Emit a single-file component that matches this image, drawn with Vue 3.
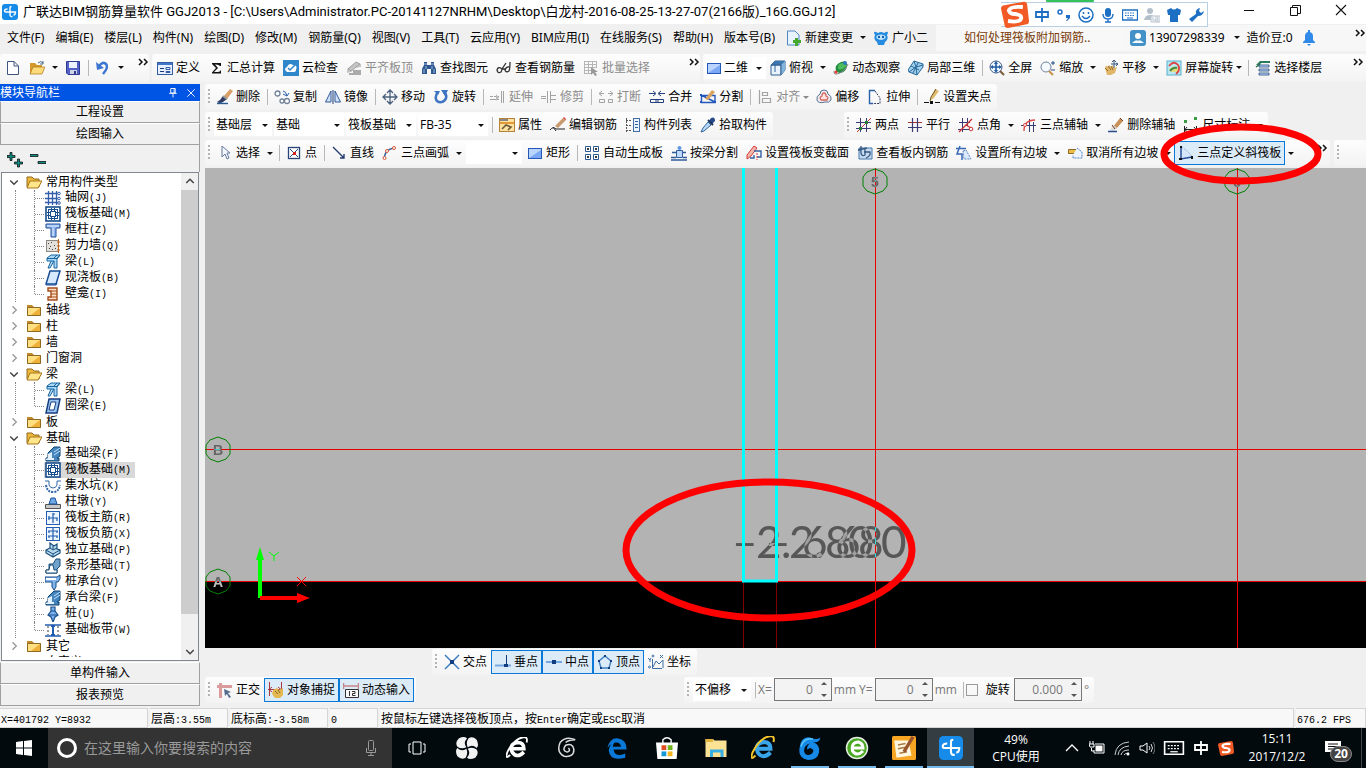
<script setup>
import { h } from 'vue'

const B = '#2b5fa8'
const N = '#183c78'
const G = '#a3a3a3'
const line = (d, c = N, w = 1) => `<path d="${d}" fill="none" stroke="${c}" stroke-width="${w}"/>`
const fill = (d, c) => `<path d="${d}" fill="${c}"/>`

const glyphs = {
  app: '<rect width="16" height="16" rx="3" fill="#168bea"/>' + line('M8 3V10.5Q8 13 10.5 12.5M5.5 5Q2.5 5 2.5 7Q2.500 8 4 8H13.5Q13.5 11 11.5 11M8 3.500Q8 2.500 9.500 2.500', '#fff', 1.4),
  new: '<path d="M2.5 1.5H9L13.5 6V14.5H2.5Z" fill="#fff" stroke="#41557f"/>' + line('M9 1.5V6H13', '#41557f'),
  open: fill('M1 3H6L8 5H13V14H1Z', '#d59a2c') + '<path d="M1 14L4 7H16L13 14Z" fill="#ffdc7a" stroke="#a87418" stroke-width=".7"/>' + line('M9 3Q12 0 14 3M14 1V4H11', '#49688f'),
  save: '<path d="M1.5 1.5H14.5V14.5H3L1.5 13Z" fill="#5260c8" stroke="#303b92"/><rect x="4" y="2" width="8" height="6" fill="#eef2ff"/><rect x="5" y="10" width="7" height="4" fill="#cfd3e5"/><rect x="9" y="11" width="2" height="3" fill="#303b92"/>',
  undo: line('M4 6Q8 1 11 4T8 14', '#3d76d2', 2.5) + fill('M1 2L2 10L9 8Z', '#3d76d2'),
  define: '<rect x="0.5" y="2.5" width="15" height="12" fill="#e8f0ff" stroke="#345da5"/><path d="M1 3H15V5H1Z" fill="#4477c8"/>' + line('M3 8.5H7M3 11.5H7', N) + '<path d="M9 7.5H13V9.5H9ZM9 11.5H13V12.5H9Z" fill="none" stroke="#345da5"/>',
  sigma: fill('M4 3H13V6H12Q11 4.5 8 4.5H7L10 8L6 12H10Q12 12 13 10V13.5H4V12.5L8 8L4 4Z', '#111'),
  cloud: '<rect width="16" height="16" fill="#2e87ca"/><path d="M4 12Q0 9 4 7Q6 2 10 5Q15 5 13 10Q13 12 10 12Z" fill="#fff"/>' + line('M5 8L7 10L12 5', '#2e87ca', 1.5),
  slab: fill('M1 9L10 2L15 4V7L9 8L5 12L1 13Z', '#c5c5c5') + line('M2 9L10 2L14 4L5 11Z', G) + fill('M7 10H15V15H3V13H7Z', '#aaa'),
  binoc: fill('M3 2H6V5H10V2H13V5L15 9V14H10V9H6V14H1V9L3 5Z', '#2e568f') + line('M3 9V13M5 6V9M11 6V9M13 9V13', '#9dbbe5') + line('M3 4H6M10 4H13', '#9dbbe5'),
  glasses: line('M6 9Q2 6 1 10Q2 14 5 12Q6 10 6 9L10 3M14 7Q10 6 9 10Q10 13 13 11Q14 9 14 2M6 9H9', '#333', 1.3),
  batch: line('M1 1.5H13M1 4.5H13M1 7.5H13M1 10.5H8M1 13.5H8M1.5 1V14M5.5 1V14M9.5 1V8M13.5 1V8', '#b5b5b5') + fill('M8 7L15 12L12 12L14 15L12 16L10 13L8 15Z', '#999'),
  rect: '<rect x="1.5" y="3.5" width="13" height="10" fill="#b9d4ff" stroke="#2458b8"/>' + fill('M2 13L14 5V13Z', '#7aa8f5'),
  cube: '<path d="M1 5L5 1H15V10L11 15H1Z" fill="#e8f3ff" stroke="#315e94"/><path d="M1 5H11V15M11 5L15 1" fill="none" stroke="#315e94"/><path d="M1 5L5 1H15L11 5Z" fill="#3b76ae"/><path d="M11 5L15 1V10L11 15Z" fill="#83b4dc"/>' + line('M1 5H11V15M5 5V12', '#315e94'),
  orbit: fill('M3 11Q1 5 8 2Q15 0 14 7Q12 13 6 13Z', '#208a40') + fill('M5 9Q4 3 10 3L14 5Q10 11 5 9Z', '#4fbc5c') + line('M1 11Q0 16 7 13Q14 9 15 4', '#888') + '<circle cx="3" cy="12" r="1.5" fill="#e53b33"/><circle cx="12" cy="3" r="2" fill="#2f7ac0"/>',
  local3d: '<path d="M0 10L6 1L15 4V7L9 15L1 12Z" fill="#a3d1ec" stroke="#26679b"/>' + line('M6 1L8 7L1 12M8 7L15 5M8 7L9 15M3 6L11 10M10 3L5 13', '#26679b'),
  full: '<circle cx="7" cy="7" r="6" fill="#eaf5ff" stroke="#465d82"/>' + line('M11 11L15 15', '#7b5a3a', 2) + line('M3 7H11M7 3V11', '#245c9f', 1.6) + fill('M7 1L9 4H5ZM7 13L9 10H5ZM1 7L4 5V9ZM13 7L10 5V9Z', '#245c9f'),
  zoom: '<circle cx="6" cy="7" r="5" fill="#f5faff" stroke="#71849e"/>' + line('M9 11L13 15', '#c89049', 2) + line('M11 3H15M13 1V5M11 10H15', '#234b84'),
  pan: fill('M2 8Q3 4 5 7L6 5L8 7L10 5L11 8L14 7L12 13L8 15H4Z', '#e0b76a') + line('M2 8L5 11M5 6L8 10M8 6L10 10', '#966622') + line('M11 1V8M8 4H15M9 2L11 0L13 2M13 3L15 4L13 6', '#375780'),
  screen: '<rect x="1" y="1" width="14" height="14" fill="#b9e8f5" stroke="#55b2c9"/><path d="M3 9Q8 4 13 9L11 12H5Z" fill="#e2dc83"/>' + line('M3 6Q8 0 12 5Q15 10 10 14', '#d44', 1.8) + line('M4 11Q7 7 11 8', '#468b45', 2),
  floor: fill('M1 5L5 1H15V3H6L5 5Z', '#2a7a5c') + '<path d="M4 5H14V7H4ZM4 9H14V11H4ZM4 13H14V15H4Z" fill="#bcd8ff" stroke="#234c78" stroke-width=".8"/>' + line('M1 7L4 5', '#277348', 1.5),
  erase: fill('M5 10L12 1L15 4L8 12Z', '#c99157') + fill('M5 8L9 11L6 14L2 13Z', '#ddd') + line('M4 8L7 12M12 1L15 4', '#783b20') + line('M0 14.5H9', '#2b4d8c', 1.5),
  brush: fill('M7 7L13 0L16 2L10 10Z', '#d9a06a') + fill('M6 7L10 10L6 13Q3 15 0 13L3 11Z', '#303b63') + line('M6 7L10 10', '#999', 2) + line('M0 14.5H11', '#245b96', 1.4),
  copy: '<g fill="#fff" stroke="#718299" stroke-width="1.3"><circle cx="3.5" cy="4.5" r="2.5"/><circle cx="8" cy="12" r="2"/><circle cx="13" cy="12" r="2.5"/></g>' + line('M9 2Q12 2 13 7M9 5L13 7L15 4', B),
  mirror: '<path d="M.5 13L6 2V13ZM10 2L15.5 13H10Z" fill="#d2e2fb" stroke="#315a9b"/>' + line('M8 1V15', N),
  move: line('M8 1V15M1 8H15M5 4L8 1L11 4M5 12L8 15L11 12M4 5L1 8L4 11M12 5L15 8L12 11', '#4a607e', 1.3),
  rotate: line('M5 3Q1 8 4 12Q8 15 12 11Q15 7 11 3', '#3d75c2', 2.5) + fill('M8 1H15L12 7ZM1 2H7L5 6Z', '#3d75c2'),
  extend: line('M0 7.5H3M4 7.5H9M0 10.5H9M11.5 2V14M13.5 2V14', G) + fill('M6 5L9 8.5L6 12Z', '#bbb'),
  trim: line('M0 7.5H5M6.5 2V14M9.5 2V14M0 9.5H5', G) + line('M10 6.5H15M10 10.5H15', G),
  break: line('M1 4.5H6M10 4.5H15M4 2L1 4.5L4 7M12 2L15 4.5L12 7M1.5 10.5H6.5V13.5H1.5ZM10.5 10.5H14.5V13.5H10.5Z', G),
  merge: line('M0 4.5H6M10 4.5H16M4 2L7 4.5L4 7M12 2L9 4.5L12 7M1.5 10.5H14.5V13.5H1.5ZM7 10V13M9 10V13', '#243f80'),
  split: line('M1.5 6.5H15V13.5H1.5ZM1 6L15 13', '#2457bd', 1.4) + fill('M5 10L12 1L15 3L8 11Z', '#dba35d') + fill('M0 5H2V7H0ZM14 12H16V14H14ZM0 12H2V14H0Z', '#2457bd'),
  align: line('M2.5 1V15M5.5 3.5H10.5V6.5H5.5ZM5.5 9.5H13.5V13.5H5.5Z', G, 1.2),
  offset: '<path d="M8 1Q12 1 12 5Q16 7 15 11Q13 14 9 13Q2 15 1 11Q0 7 4 5Q4 1 8 1Z" fill="#e8edf4" stroke="#61728e"/><path d="M8 4Q10 4 10 7Q13 8 11 11H5Q3 8 6 7Q6 4 8 4Z" fill="#ffe5dc" stroke="#d86560" stroke-width="1.3"/>',
  stretch: line('M8 1.5H2.5V14.5H6', '#2b5fa8', 1.4) + '<path d="M8 2L13 9V14.5H6" fill="none" stroke="#34405e" stroke-dasharray="2 1"/>',
  grip: line('M0 13.5H5M11 13.5H16', '#111') + fill('M6 12H9V15H6Z', '#111') + fill('M6 11L11 0L15 2L9 10Z', '#e0bb70') + line('M6 12L7 8L12 0', '#6b5426'),
  props: '<rect x=".5" y="1.5" width="15" height="13" fill="#ffe1a0" stroke="#b6813a"/><path d="M1 2H9V4H1Z" fill="#888"/>' + fill('M1 5H15V7H1Z', '#e59a3a') + line('M3 12L7 8L12 10L9 13', '#695a37', 1.6),
  editbar: line('M0 13Q3 9 6 12H15M3 10L6 14', '#222') + fill('M5 9L13 1L16 3L8 11Z', '#c99a6d') + fill('M13 1L14 0L16 2L16 3Z', '#d33'),
  list: '<rect x="8.5" y="1.5" width="6" height="13" fill="#e9f2ff" stroke="#456da5"/>' + line('M10 4.5H13M10 7.5H13M10 10.5H13', B) + '<path d="M1 3.5H6M1 8.5H6M1 13.5H6M1.5 1V15" fill="none" stroke="#555" stroke-dasharray="2 1"/>',
  picker: fill('M9 4L11 1Q15 -1 15 4L12 7Z', '#284a87') + line('M8 3L13 8', '#18345d', 2) + '<path d="M8 5L11 8L4 14L1 15L3 11Z" fill="#b5d8fb" stroke="#32639d"/>',
  twopt: line('M0 5.5H15M0 11.5H15M4.5 1V15M10.5 1V15', '#3a3a75') + line('M1 15L15 1', '#c33') + fill('M3 10H6V13H3ZM9 4H12V7H9Z', '#287e35'),
  parallel: line('M1 5.5H15', '#a33') + line('M1 10.5H15M5.5 1V15M10.5 1V15', '#3a3a75', 1.2),
  angle: line('M1 5.5H12M0 12.5H15M4.5 1V15M9.5 1V9', '#3a3a75') + line('M1 15L14 2M8 8L13 11', '#c33', 1.4) + '<circle cx="13" cy="12" r="1.8" fill="#fff" stroke="#c33"/>',
  axisarc: line('M0 8.5H15M8.5 2V15M12.5 5V15', '#3a3a75') + line('M3 14Q3 3 14 3', '#d44', 1.4) + '<circle cx="4" cy="8" r="1.5" fill="#fff" stroke="#d44"/>',
  measure: fill('M1 3H4V6H1ZM11 0H14V3H11Z', '#399b43') + line('M1.5 9V15M13.5 9V15M2 12.5H13M4 10L2 12.5L4 15M11 10L13 12.5L11 15', '#222'),
  cursor: '<path d="M5 1V12L8 9L10 14L12 13L10 8H13Z" fill="#f3f7ff" stroke="#66799d"/>',
  point: '<rect x="2.5" y="2.5" width="11" height="11" fill="#fff" stroke="#27457a" stroke-width="1.3"/>' + line('M4 4L12 12M12 4L4 12', '#274f94') + fill('M7 7H10V10H7Z', '#d22'),
  straight: line('M2 2L13 13M13 9V13H9', '#233d71', 1.4),
  arc: line('M2 14Q3 4 12 3', '#355d9b', 1.5) + '<g fill="#fff" stroke="#d45839"><circle cx="2.5" cy="13" r="1.5"/><circle cx="5" cy="6" r="1.5"/><circle cx="12" cy="3" r="1.5"/></g>',
  auto: '<g fill="#fff" stroke="#28558c"><path d="M1.5 1.5H6.5V6.5H1.5ZM9.5 1.5H14.5V6.5H9.5ZM1.5 9.5H6.5V14.5H1.5ZM9.5 9.5H14.5V14.5H9.5Z"/></g>' + fill('M3 3H5V5H3ZM11 3H13V5H11ZM3 11H5V13H3ZM11 11H13V13H11Z', '#333'),
  beam: '<path d="M5.5 5.5H11.5V12.5H5.5Z" fill="#bdd9ff" stroke="#315c99"/><circle cx="8.5" cy="3" r="2" fill="#6197e1"/>' + line('M1 7.5H5M12 7.5H15M0 12.5H5M12 12.5H16M0 15H16', '#315c99', 1.3),
  section: '<path d="M1 10L8 1L11 3L5 11L1 14Z" fill="#f3b7ab" stroke="#d33b3b"/><path d="M4 13H8V10M8 6H15V12H11" fill="none" stroke="#3561a2" stroke-width="1.4"/><path d="M11 8V15" stroke="#d33" stroke-dasharray="2 1"/>',
  inside: '<path d="M2 3H15V14H2Z" fill="#c7dcf2" stroke="#4776aa"/>' + line('M4 1V8Q5 12 8 10V4M1 5L10 3M7 7H13Q14 11 9 13', '#37597f', 1.3),
  slope: line('M0 3.5H10M4 1L1 9H6V15', '#3767b5', 1.5) + '<path d="M7 6L10 5L15 14H8Z" fill="#dce9ff" stroke="#5b86c4" stroke-dasharray="2 1"/>',
  unslope: fill('M1 5H9V9H1Z', '#e9bd48') + line('M1.5 4.5H9.5V8.5H1.5Z', '#8c6a25') + '<path d="M10 3L15 7V13H6V10" fill="#edf4ff" stroke="#4c7ec6" stroke-dasharray="2 1"/>',
  threept: '<path d="M3 2V14L14 12Q10 5 3 2Z" fill="#d5e6fa" stroke="#9ab4d6" stroke-dasharray="2 1"/>' + line('M3 2V14L14 12', '#264b9b', 1.4) + fill('M2 1H4V3H2ZM1 13H4V15H1ZM13 11H15V14H13Z', '#111'),
  cross: line('M1 1L15 15M15 1L1 15', '#3f7fc2', 1.5) + fill('M6 6H10V10H6Z', '#123e80'),
  perp: line('M0 11.5H16', '#74a8de', 2) + line('M11.5 1V11', '#123e80') + fill('M9 10H13V13H9Z', '#123e80'),
  mid: line('M0 8H16', '#74a8de', 2) + fill('M6 6H10V10H6Z', '#123e80'),
  vertex: line('M8 2L14 7L12 14H4L2 7Z', '#3f7fc2', 1.4) + fill('M7 1H9V3H7ZM1 6H3V8H1ZM13 6H15V8H13ZM3 13H5V15H3ZM11 13H13V15H11Z', '#123e80'),
  coord: line('M4.5 5V14.5H14M5 13L8 7L11 10L15 6M15 6V14M0 4L2 6V8M3 4L2 6M12 1L15 4M15 1L12 4', '#3f70a6') + '<g fill="#fff" stroke="#3f70a6"><circle cx="1.5" cy="13" r="1"/><circle cx="5" cy="2" r="1"/></g>',
  ortho: fill('M2 1H5V16H2ZM0 3H15V6H0Z', '#d99b9b') + fill('M7 7L14 10L11 11L14 15L12 16L10 12L8 14Z', '#536d8e'),
  snap: line('M1.5 0V14M13.5 0V8M0 7.5H14M4 5L1 7.5L4 10M10 5L13 7.5L10 10', '#a8383d') + fill('M5 8L9 6L11 8L15 6V13L12 16H7L4 12Z', '#e3b850') + line('M7 9L10 12M10 8L12 11', '#8a6829'),
  dyn: line('M.5 1V7M15.5 1V7M1 4H15', '#c58686', 1.5) + '<path d="M2.5 7.5H15.5V15.5H2.5Z" fill="#f9f9f9" stroke="#333"/>' + line('M6.5 9V14M9 9.5H12V11.5H9.5V13.5H12.5', '#333'),
  docplus: '<path d="M1.5 1H9L13 5V15H1.5Z" fill="#e7f3ff" stroke="#4f87c3"/>' + fill('M9 8H12V10H15V13H12V16H9V13H7V10H9Z', '#46a82c'),
  mascot: fill('M1 3Q1 1 3 2L5 3Q8 1 11 3L13 2Q15 1 15 3L14 5Q16 9 12 12L11 15H5L4 12Q0 9 2 5Z', '#258ce0') + fill('M3.5 6Q8 3 12.5 6V8Q8 12 3.5 8Z', '#bfe3fa') + fill('M5 6H7V8H5ZM9 6H11V8H9Z', '#155da8'),
  user: '<rect width="16" height="16" rx="3" fill="#4391c7"/><circle cx="8" cy="6" r="3" fill="#fff"/><path d="M2 13Q8 7 14 13Z" fill="#fff"/><path d="M7 9H9L8 12Z" fill="#4391c7"/>',
  bell: fill('M2 12L4 10V5Q5 2 7 2V0H9V2Q12 3 12 6V10L14 12V13H2ZM6 14H10L8 16Z', '#318ae8'),
  fclose: fill('M1 3H6L8 5H15V14H1Z', '#c08a28') + '<path d="M1.5 5.5H14.5V13.5H1.5Z" fill="#ffdf80" stroke="#8f6a20"/>' + fill('M5 13L14 6V13Z', '#eeb03a'),
  fopen: '<path d="M1 3H6L8 5H13V13H1Z" fill="#eeb83d" stroke="#8f6a20"/><path d="M1 14L4 7H16L12 14Z" fill="#ffe68b" stroke="#a87418"/>',
  mesh: line('M3.5 1V15M7.5 1V15M11.5 1V15M0 3.5H15M0 8.5H15M0 12.5H15', '#355eaa', 1.3) + '<g fill="#fff" stroke="#355eaa"><circle cx="14" cy="3.5" r="1.3"/><circle cx="14" cy="8.5" r="1.3"/><circle cx="14" cy="13" r="1.3"/></g>',
  raft: '<rect x="1" y="1" width="14" height="14" fill="#fff" stroke="#174d8c" stroke-width="1.6"/>' + line('M3 3.5H13M3 12.5H13M3.5 3V13M12.5 3V13M6.5 2V14M9.500 2V14M2 6.5H14M2 9.5H14', '#174d8c') + '<rect x="5.5" y="5.5" width="5" height="5" fill="#fff" stroke="#174d8c"/>',
  column: '<path d="M1 2H15V6H11V15H6V6H1Z" fill="#90b8ef" stroke="#224f9a"/>' + line('M2 4H14M8 6V14', '#e5f0ff'),
  wall: '<rect x="1.5" y="2.5" width="12" height="11" fill="#e3dfdb" stroke="#8c8782"/>' + fill('M3 5H4V6H3ZM6 4H7V5H6ZM9 7H10V8H9ZM4 10H5V11H4ZM7 11H8V12H7ZM5 8H6V9H5ZM10 10H11V11H10Z', '#444') + line('M13.5 1V15M12 4H15M12 8H15M12 12H15', '#bc6523'),
  beam2: '<path d="M2 4L6 1H15L12 5V14H9V7L5 14H3L6 7H2Z" fill="#a9d7fa" stroke="#16659e"/>' + line('M2 4.500H12L15 1M6 7H9M9 4L12 1', '#16659e'),
  plate: '<path d="M5 1H15L11 14H1Z" fill="#d7e9ff" stroke="#174d98" stroke-width="1.5"/>' + line('M1 15H11L12 13', '#174d98'),
  niche: '<path d="M3 2H12V14H3V11H6V5H3Z" fill="#ffdfc3" stroke="#a44d1c" stroke-width="1.4"/>' + line('M6 5H12M6 8H12M6 11H12', '#a44d1c'),
  ring: '<path d="M4 1H15L12 15H1Z" fill="#9dc5f4" stroke="#153e7e" stroke-width="1.5"/><path d="M6 4H11L9 12H4Z" fill="#fff" stroke="#153e7e"/>',
  fbeam: '<path d="M1 15V12H3V7L9 1H15V10L12 12H14V15Z" fill="#4585bd" stroke="#0c4272"/><path d="M3 12V8L7 6V12H9V14H1V13Z" fill="#e3f1ff"/>' + line('M9 6L15 2M9 9L15 5', '#c1e0fb'),
  pit: '<path d="M0 3H4V7Q5 10 8 10Q11 10 12 7V3H16" fill="none" stroke="#3267aa"/>' + '<path d="M1 7Q2 14 8 14Q14 14 15 7" fill="none" stroke="#3267aa" stroke-width="2" stroke-dasharray="2 1"/>',
  pier: '<path d="M.5 10.5H15.5V14.5H.5Z" fill="#c8c8c8" stroke="#555"/><path d="M6 4H10L12 10H4Z" fill="#6fa8e5" stroke="#18529b"/>',
  main: '<rect x="1.5" y="1.5" width="13" height="13" fill="#edf5ff" stroke="#225eaf"/>' + line('M8 3V13M3 8H13M4 6V10M8 4H10M12 8V11', '#225eaf', 1.2),
  neg: '<rect x="1.5" y="1.5" width="13" height="13" fill="#edf5ff" stroke="#225eaf"/>' + line('M8 2V14M3 5H13M4 5V7M12 5V7M3 10H13M4 10V12M12 10V12', '#225eaf', 1.2),
  isolated: '<path d="M1 8L5 6V1L9 4L12 2V7L15 8V11L8 15L1 11Z" fill="#b8d9ed" stroke="#184f7c" stroke-width="1.2"/>' + line('M1 8L8 12L15 8M8 12V15M5 6L8 8L12 6M8 4V8', '#184f7c'),
  strip: '<path d="M1 15V12H4V6H8L11 1H15V8L12 11V15Z" fill="#70a4cc" stroke="#174d78"/><path d="M1 15V12H4L5 7H8L9 12H12V15Z" fill="#fff" stroke="#174d78"/>',
  cap: '<path d="M0 3H12L15 1V5L13 8H11V13L9 16L7 13V8H0Z" fill="#82b5e8" stroke="#174d8c"/><path d="M1 4H11V6H1Z" fill="#fff"/>',
  pile: '<path d="M6 1H10V5L13 9L10 11L8 16L6 11L3 9L6 5Z" fill="#79b0ef" stroke="#194f8a" stroke-width="1.2"/>' + line('M6 5H10M3 9H13', '#194f8a'),
  band: line('M0 3H16M0 14H16', '#225eaf', 1.4) + line('M8 4V13M6 4H10M6 13H10', '#225eaf', 2) + '<path d="M3 4V13M13 4V13" fill="none" stroke="#333" stroke-dasharray="2 2"/>',
  sogou: '<path d="M2 3L13 1Q15 1 15 3L16 12Q16 14 14 14L4 16Q2 16 2 14L0 5Q0 3 2 3Z" fill="#f15a24"/>' + line('M12.5 4Q5 3.5 4.500 6Q5 8 8 8Q12 8.5 11.5 10.5Q11 13 4 12', '#fff', 2.2),
  zhong: line('M2 5H14V10H2ZM8 1V15', 'currentColor', 1.8),
  comma: '<circle cx="4" cy="5" r="2" fill="none" stroke="currentColor" stroke-width="1.5"/><path d="M10 8H14V11L11 14H10L12 11H10Z" fill="currentColor"/>',
  smile: '<circle cx="8" cy="8" r="7" fill="none" stroke="currentColor" stroke-width="1.5"/>' + line('M4 9Q8 14 12 9M5.5 5V7M10.5 5V7', 'currentColor', 1.5),
  mic: '<rect x="5" y="1" width="6" height="9" rx="3" fill="currentColor"/>' + line('M3 7Q3 12 8 12Q13 12 13 7M8 12V15M5 15H11', 'currentColor', 1.4),
  micline: '<rect x="5.5" y=".5" width="5" height="10" rx="1" fill="none" stroke="currentColor"/>' + line('M3.5 8V12.5H12.5V8M8 12V15M5 15.5H11', 'currentColor'),
  keys: '<path d="M.5 3H15.5V13H.5Z" fill="none" stroke="currentColor" stroke-width="1.3"/><path d="M3 6H13M3 8.5H13" stroke="currentColor" stroke-dasharray="1.5 1"/><path d="M5 11H11" stroke="currentColor"/>',
  person: '<circle cx="6" cy="4" r="3" fill="currentColor"/><path d="M0 13Q1 8 6 8T12 13Z" fill="currentColor"/><path d="M7 9H16V15H7Z" fill="#fff" stroke="currentColor"/>' + line('M9 10V14M11 10H14V14H11V12H14', 'currentColor'),
  shirt: fill('M1 3L5 1Q8 4 11 1L15 3L14 8H12V15H4V8H2Z', 'currentColor'),
  wrench: fill('M8 7Q7 2 12 1L11 4L13 6L16 4Q15 9 10 9L4 15L1 12Z', 'currentColor'),
  win: fill('M0 2L7 1V7.5H0ZM8 1L16 0V7.5H8ZM0 8.5H7V15L0 14ZM8 8.5H16V16L8 15Z', '#fff'),
  taskview: line('M4 2H12V14H4ZM2 4H0V12H2M14 4H16V12H14', '#fff'),
  pinwheel: '<g fill="#f2f2f2"><path d="M7.500 7.500Q4 9 1 7Q-1 4 2 1Q6 -1 8 1Q5 4 7.500 7.500ZM8.500 7.500Q7 4 9 1Q12 -1 15 2Q17 6 15 8Q12 5 8.500 7.500ZM8.500 8.500Q12 7 15 9Q17 12 14 15Q10 17 8 15Q11 12 8.500 8.500ZM7.500 8.500Q9 12 7 15Q4 17 1 14Q-1 10 1 8Q4 11 7.500 8.500Z"/></g>',
  ie: line('M13 11Q8 16 4.5 11Q2 5 8.5 4Q13 4 13 8.5H5', 'currentColor', 2.6) + line('M3 13Q-1 17 1 11Q6 1 13 0Q16 0 15 4', 'var(--orbit)', 1.3),
  swirl: line('M14 2Q7 -1 3 4Q0 11 6 14Q13 15 13 9Q12 4 7 6Q4 10 8 11Q11 10 9 8M14 2Q9 2 7 4', '#ddd', 1.1),
  edge: '<path d="M1 8Q3 0 9 1Q15 2 15 9H5.5Q6 13 10 13Q12 13 14 12V15Q3 18 2 10Q2 6 6 4Q5 6 5 7H11Q10 4 8 4Q4 4 1 8Z" fill="#0a78d7"/>',
  store: '<path d="M0 4H16L15 16H1Z" fill="#fff"/>' + line('M5 5V2Q8 -1 11 2V5', '#fff') + fill('M4 6H7.5V9.5H4Z', '#e34c22') + fill('M8.5 6H12V9.5H8.5Z', '#70b51d') + fill('M4 10.5H7.5V14H4Z', '#1497d4') + fill('M8.5 10.5H12V14H8.5Z', '#f5b51e'),
  explorer: fill('M1 2H6L7 3H15V14H1Z', '#fce294') + fill('M1 2H6V4H1Z', '#e2b33d') + fill('M4 9H13V14H11V11H6V14H4Z', '#38afe2'),
  glodon: fill('M15 1Q14 5 10 4Q15 6 14 11Q13 16 7 16Q0 15 1 8Q2 0 8 1Q12 3 15 1ZM8 5Q4 6 4 10Q5 14 9 12Q12 9 8 8L6 9Q6 6 8 5Z', '#1689e6') + line('M2 7Q4 1 10 2', '#59c8ff'),
  green: '<circle cx="8" cy="8" r="7" fill="#49a725" stroke="#e2efdc"/>' + line('M12 10Q8 14 5 10Q4 4 9 4Q12 5 12 8H5', '#fff', 2),
  note: '<rect width="16" height="16" rx="1" fill="#f6a622"/><path d="M1.5 3H11L13 13L3 14.5Z" fill="#fff7df"/>' + line('M4 6L9 5M4 8.5L9 7.5M5 11.5L10 10.5', '#a87942') + fill('M7 10L13 0L15 1L9 11Z', '#99532d'),
  up: line('M2 11L8 5L14 11', '#fff', 1.3),
  battery: '<rect x="6.5" y="5.5" width="7" height="6" fill="#fff"/>' + line('M6 4H15V13H5V10M1 1V4M4 1V4M0 4H5V7H1ZM2.5 8V11H5', '#fff'),
  wifi: line('M1 15Q2 3 15 2M4 15Q5 7 15 6M7 15Q8 10 15 10M10 15Q11 13 15 13', '#ccc') + '<circle cx="14" cy="14" r="1.5" fill="#fff"/>',
  sound: line('M1 6H4L8 3V13L4 10H1Z', '#fff') + line('M10 6Q12 8 10 10M12 4Q15 8 12 12', '#ddd') + line('M14 2Q18 8 14 14', '#777'),
  notice: fill('M0 1H16V12H10V15L7 12H0Z', '#fff') + line('M3 4H13M3 6.5H13M3 9H10', '#111'),
  more: line('M2 5L5 8L2 11M7 5L10 8L7 11', '#111', 1.5),
  plus: '<path d="M3 .5H5V3.5H8V5.5H5V8.5H3V5.5H0V3.5H3ZM10.5 7H12.5V10H15.5V12H12.5V15H10.5V12H7.5V10H10.5Z" fill="#0b8f83" stroke="#111" stroke-width=".8"/>',
  minus: '<path d="M0 2.5H8V4.5H0ZM8 9.5H16V11.5H8Z" fill="#0b8f83" stroke="#111" stroke-width=".8"/>',
  pin: line('M5 2H11V8H5ZM9.5 2V8M3 8.5H13M8 9V14', '#fff', 1.2),
  cancel: line('M3 3L13 13M13 3L3 13', '#fff', 1.2),
  min: line('M3 8.5H13', '#111'),
  restore: line('M3.5 5.5H10.5V13.5H3.5ZM5.5 5V3.5H13.5V11.5H11', '#111'),
  close: line('M3 3L13 13M13 3L3 13', '#111', 1.1),
  down: line('M3 6L8 11L13 6', '#444', 2),
  right: line('M6 3L11 8L6 13', '#999', 1.8),
  upg: line('M3 10L8 5L13 10', '#444', 2),
}

const Icon = (p) => h('svg', { class: 'icon', viewBox: '0 0 16 16', 'aria-hidden': 'true', innerHTML: glyphs[p.name] })
Icon.props = ['name']

const tool = (i, t, o = {}) => ({ i, t, ...o })
const pick = (s, o = {}) => ({ s, ...o })

const Bar = (p) => h('div', { class: ['bar', p.kind], role: 'toolbar' }, p.items.flatMap((it) => {
  if (it === '|') return [h('span', { class: 'sep' })]
  if (it === ':') return [h('span', { class: 'grip' })]
  if (it === '>>') return [h('button', { class: 'more', 'aria-label': '更多' }, h(Icon, { name: 'more' }))]
  if (it.s !== undefined) {
    return [h('label', { class: ['pick', it.size] }, [
      it.i ? h(Icon, { name: it.i }) : null,
      h('select', { 'aria-label': it.s || '选项' }, [h('option', it.s)]),
    ])]
  }
  const out = [h('button', { class: ['tool', { off: it.off, on: it.on }], disabled: it.off, 'aria-label': it.t || it.i }, [
    h(Icon, { name: it.i }), it.t ? h('span', it.t) : null,
  ])]
  if (it.c) out.push(h('button', { class: ['caret', { tight: it.c === 2, off: it.off }], 'aria-label': '展开' }))
  return out
}))
Bar.props = ['items', 'kind']

const menus = ['文件(F)', '编辑(E)', '楼层(L)', '构件(N)', '绘图(D)', '修改(M)', '钢筋量(Q)', '视图(V)', '工具(T)', '云应用(Y)', 'BIM应用(I)', '在线服务(S)', '帮助(H)', '版本号(B)']

const topBars = [
  { kind: 'first', items: [tool('new', ''), tool('open', '', { c: 1 }), tool('save', ''), '|', tool('undo', '', { c: 1 }), '>>'] },
  { kind: 'second', items: [tool('define', '定义'), tool('sigma', '汇总计算'), tool('cloud', '云检查'), tool('slab', '平齐板顶', { off: true }), tool('binoc', '查找图元'), tool('glasses', '查看钢筋量'), tool('batch', '批量选择', { off: true }), '>>'] },
  { kind: 'wide', items: [pick('二维', { i: 'rect', size: 'view' }), tool('cube', '俯视', { c: 1 }), tool('orbit', '动态观察'), tool('local3d', '局部三维'), '|', tool('full', '全屏'), tool('zoom', '缩放', { c: 1 }), tool('pan', '平移', { c: 1 }), tool('screen', '屏幕旋转', { c: 2 }), '|', tool('floor', '选择楼层'), '>>'] },
]

const workRows = [
  [{ items: [':', tool('brush', '删除'), '|', tool('copy', '复制'), tool('mirror', '镜像'), '|', tool('move', '移动'), tool('rotate', '旋转'), '|', tool('extend', '延伸', { off: true }), tool('trim', '修剪', { off: true }), '|', tool('break', '打断', { off: true }), tool('merge', '合并'), tool('split', '分割'), '|', tool('align', '对齐', { off: true, c: 2 }), tool('offset', '偏移'), tool('stretch', '拉伸'), '|', tool('grip', '设置夹点')] }],
  [
    { items: [':', pick('基础层', { size: 'short' }), pick('基础'), pick('筏板基础'), pick('FB-35'), '|', tool('props', '属性'), tool('editbar', '编辑钢筋'), tool('list', '构件列表'), tool('picker', '拾取构件')] },
    { kind: 'apart', items: [':', tool('twopt', '两点'), tool('parallel', '平行'), tool('angle', '点角', { c: 1 }), tool('axisarc', '三点辅轴', { c: 1 }), tool('erase', '删除辅轴'), tool('measure', '尺寸标注', { c: 1 })] },
  ],
  [
    { items: [':', tool('cursor', '选择', { c: 1 }), '|', tool('point', '点'), '|', tool('straight', '直线'), tool('arc', '三点画弧', { c: 1 }), pick('', { size: 'slim' }), tool('rect', '矩形'), '|', tool('auto', '自动生成板'), tool('beam', '按梁分割'), tool('section', '设置筏板变截面'), tool('inside', '查看板内钢筋'), tool('slope', '设置所有边坡', { c: 1 }), tool('unslope', '取消所有边坡', { c: 1 }), tool('threept', '三点定义斜筏板', { on: true, c: 1 }), '>>'], kind: 'full' },
    { kind: 'stub', items: [':'] },
  ],
]

const snapBar = [':', tool('cross', '交点'), tool('perp', '垂点', { on: true }), tool('mid', '中点', { on: true }), tool('vertex', '顶点', { on: true }), tool('coord', '坐标')]
const modeBar = [':', tool('ortho', '正交'), tool('snap', '对象捕捉', { on: true }), tool('dyn', '动态输入', { on: true })]

const leaf = (i, t, k, on) => ({ i, t, k, on })
const tree = [
  { t: '常用构件类型', kids: [leaf('mesh', '轴网', '(J)'), leaf('raft', '筏板基础', '(M)'), leaf('column', '框柱', '(Z)'), leaf('wall', '剪力墙', '(Q)'), leaf('beam2', '梁', '(L)'), leaf('plate', '现浇板', '(B)'), leaf('niche', '壁龛', '(I)')] },
  { t: '轴线' }, { t: '柱' }, { t: '墙' }, { t: '门窗洞' },
  { t: '梁', kids: [leaf('beam2', '梁', '(L)'), leaf('ring', '圈梁', '(E)')] },
  { t: '板' },
  { t: '基础', kids: [leaf('fbeam', '基础梁', '(F)'), leaf('raft', '筏板基础', '(M)', true), leaf('pit', '集水坑', '(K)'), leaf('pier', '柱墩', '(Y)'), leaf('main', '筏板主筋', '(R)'), leaf('neg', '筏板负筋', '(X)'), leaf('isolated', '独立基础', '(P)'), leaf('strip', '条形基础', '(T)'), leaf('cap', '桩承台', '(V)'), leaf('fbeam', '承台梁', '(F)'), leaf('pile', '桩', '(U)'), leaf('band', '基础板带', '(W)')] },
  { t: '其它' }, { t: '自定义' },
]

const ime = ['zhong', 'comma', 'smile', 'mic', 'keys', 'person', 'shirt', 'wrench']
const pinned = ['pinwheel', 'ie', 'swirl', 'edge', 'store']
const running = [{ i: 'explorer' }, { i: 'ie', c: 'blue' }, { i: 'glodon', c: 'run' }, { i: 'green', c: 'run' }, { i: 'note', c: 'run' }, { i: 'app', c: 'run now' }]
const tray = ['up', 'battery', 'wifi', 'sound', 'keys', 'zhong', 'sogou']
const glyphX = (start) => [0, 24, 49, 70, 93, 116].map((d) => start + d).join(' ')
</script>

<template>
  <div class="app">
    <header class="title">
      <Icon name="app" />
      <h1>广联达BIM钢筋算量软件 GGJ2013 - [C:\Users\Administrator.PC-20141127NRHM\Desktop\白龙村-2016-08-25-13-27-07(2166版)_16G.GGJ12]</h1>
      <button aria-label="最小化"><Icon name="min" /></button>
      <button aria-label="还原"><Icon name="restore" /></button>
      <button aria-label="关闭"><Icon name="close" /></button>
    </header>
    <div class="blob"></div>
    <div class="ime">
      <Icon name="sogou" class="logo" />
      <button v-for="n in ime" :key="n" :class="n" :aria-label="n"><Icon :name="n" /></button>
    </div>

    <nav class="menu">
      <button v-for="m in menus" :key="m">{{ m }}</button>
      <button class="iconic"><Icon name="docplus" />新建变更</button><button class="caret" aria-label="展开"></button>
      <button class="iconic">
        <Icon name="mascot" />广小二
      </button>
      <a class="tip" href="#">如何处理筏板附加钢筋..</a>
      <div class="account">
        <button class="iconic"><Icon name="user" />13907298339</button><button class="caret" aria-label="展开"></button>
        <span class="beans">造价豆:0</span>
        <button class="iconic" aria-label="通知"><Icon name="bell" /></button>
        <button class="more" aria-label="更多"><Icon name="more" /></button>
      </div>
    </nav>

    <div class="topbars">
      <Bar v-for="(b, i) in topBars" :key="i" :items="b.items" :kind="b.kind" />
    </div>

    <div class="body">
      <aside class="side">
        <div class="side-head"><span>模块导航栏</span>
          <button aria-label="固定"><Icon name="pin" /></button>
          <button aria-label="关闭"><Icon name="cancel" /></button>
        </div>
        <button class="tab">工程设置</button>
        <button class="tab">绘图输入</button>
        <div class="folds">
          <button aria-label="全部展开"><Icon name="plus" /></button>
          <button aria-label="全部折叠"><Icon name="minus" /></button>
        </div>
        <div class="treebox">
          <ul class="tree">
            <li v-for="g in tree" :key="g.t">
              <div class="group"><Icon :name="g.kids ? 'down' : 'right'" class="arrow" /><Icon :name="g.kids ? 'fopen' : 'fclose'" /><span>{{ g.t }}</span></div>
              <ul v-if="g.kids">
                <li v-for="k in g.kids" :key="k.t" class="leaf">
                  <span class="node" :class="{ picked: k.on }"><Icon :name="k.i" /><span>{{ k.t }}<kbd>{{ k.k }}</kbd></span></span>
                </li>
              </ul>
            </li>
          </ul>
          <div class="scroll"><Icon name="upg" /><div class="thumb"></div><Icon name="down" /></div>
        </div>
        <button class="tab">单构件输入</button>
        <button class="tab">报表预览</button>
      </aside>

      <main class="work">
        <div v-for="(r, i) in workRows" :key="i" class="row">
          <Bar v-for="(b, j) in r" :key="j" :items="b.items" :kind="b.kind" />
        </div>
        <svg class="canvas">
          <rect width="100%" height="100%" fill="#000" />
          <rect width="100%" height="413" fill="#b3b3b3" />
          <g stroke="#e60000">
            <path d="M670.5 0V1200M1032.5 0V1200" />
            <path d="M0 281.5H4000M0 413.5H4000" />
            <path d="M538.5 413V1200M571.5 413V1200" stroke="#800000" />
          </g>
          <g fill="none" stroke="#008000">
            <path d="M13 269L21 272L25 277V286L21 291L13 294L5 291L1 286V277L5 272Z" />
            <path d="M13 401L21 404L25 409V418L21 423L13 426L5 423L1 418V409L5 404Z" />
            <path d="M670 1L678 4L682 9V18L678 23L670 26L662 23L658 18V9L662 4Z" />
            <path d="M1032 1L1040 4L1044 9V18L1040 23L1032 26L1024 23L1020 18V9L1024 4Z" />
          </g>
          <g class="mark"><text x="13" y="287">B</text><text x="13" y="419">A</text><text x="670" y="19">5</text><text x="1032" y="19">6</text></g>
          <g class="level"><text :x="glyphX(527)" y="390">–2.680</text><text :x="glyphX(560)" y="390">–2.680</text></g>
          <path d="M538.5 0V413H571.5V0" fill="none" stroke="#0ff" stroke-width="3" />
          <path d="M55 430V392" stroke="#0f0" stroke-width="4" /><path d="M51 392L55 379L59 392Z" fill="#0f0" />
          <path d="M55 430H93" stroke="#f00" stroke-width="4" /><path d="M92 425L105 430L92 435Z" fill="#f00" />
          <path d="M64 384L69 388L74 384M69 388V393" fill="none" stroke="#0f0" />
          <path d="M92 409L101 418M101 409L92 418" fill="none" stroke="#f00" />
          <ellipse cx="564" cy="382" rx="143" ry="68" fill="none" stroke="#f00" stroke-width="7" />
        </svg>
        <div class="row snaps"><Bar :items="snapBar" /></div>
        <div class="row modes">
          <Bar :items="modeBar" />
          <div class="bar offset">
            <span class="grip"></span>
            <label class="pick short"><select aria-label="偏移方式"><option>不偏移</option></select></label>
            <span class="sep"></span>
            <label class="num">X=<span class="spin"><input value="0"><i></i></span>mm</label>
            <label class="num">Y=<span class="spin"><input value="0"><i></i></span>mm</label>
            <span class="sep"></span>
            <label class="check"><input type="checkbox"><span>旋转</span></label>
            <label class="num"><span class="spin long"><input value="0.000" aria-label="旋转角度"><i></i></span>°</label>
          </div>
        </div>
      </main>
    </div>

    <footer class="status">
      <span class="c1">X=401792 Y=8932</span>
      <span class="c2"><b>层高</b>:3.55m</span>
      <span class="c3"><b>底标高</b>:-3.58m</span>
      <span class="c4">0</span>
      <span class="c5"><b>按鼠标左键选择筏板顶点，按</b>Enter<b>确定或</b>ESC<b>取消</b></span>
      <span class="c6">676.2 FPS</span>
    </footer>

    <div class="taskbar">
      <button class="start" aria-label="开始"><Icon name="win" /></button>
      <label class="search"><span class="ring"></span><input placeholder="在这里输入你要搜索的内容" aria-label="搜索"><Icon name="micline" /></label>
      <button class="task view" aria-label="任务视图"><Icon name="taskview" /></button>
      <button v-for="n in pinned" :key="n" class="task" :aria-label="n"><Icon :name="n" /></button>
      <button v-for="n in running" :key="n.i" class="task open" :class="n.c" :aria-label="n.i"><Icon :name="n.i" /></button>
      <div class="cpu">49%<br>CPU使用</div>
      <div class="tray">
        <button v-for="n in tray" :key="n" :class="n" :aria-label="n"><Icon :name="n" /></button>
      </div>
      <div class="clock">15:11<br>2017/12/2</div>
      <button class="notice" aria-label="通知中心"><Icon name="notice" /><span>20</span></button>
    </div>

    <svg class="ellipse" viewBox="0 0 162 62"><ellipse cx="81" cy="31" rx="77" ry="27" fill="none" stroke="#f00" stroke-width="7" /></svg>
  </div>
</template>

<style scoped>
.app { position: relative; display: flex; flex-direction: column; min-height: 100vh; overflow: hidden; background: #f0f0f0; color: #000; font: 12px/16px "Open Sans", "Noto Sans CJK SC", sans-serif; }
.app :deep(*) { box-sizing: border-box; }
.app :deep(button), .app :deep(input), .app :deep(select) { font: inherit; color: inherit; border: 0; background: none; padding: 0; border-radius: 0; white-space: nowrap; }
:deep(.icon) { width: 16px; height: 16px; flex: none; display: block; }

.title { display: flex; align-items: center; height: 24px; background: #fff; padding: 0 2px; }
.title h1 { flex: 1; margin: 0 0 0 5px; font: 400 13px/16px Roboto, "Noto Sans CJK SC", sans-serif; white-space: nowrap; }
.title button { width: 46px; height: 24px; display: grid; place-items: center; padding-bottom: 4px; }
.blob { position: absolute; top: 0; right: 272px; width: 48px; height: 4px; background: #35c25a; border-radius: 0 0 10px 10px; }
.ime { position: absolute; top: 2px; right: 158px; display: flex; align-items: center; height: 25px; padding-left: 30px; background: linear-gradient(#fff, #fff) 14px 0 no-repeat; border: 1px solid #b9cfe4; border-left: 0; color: #1d6fc4; }
.ime button { width: 22px; display: grid; place-items: center; }
.ime button.person { color: #b4bfcc; }
.ime .logo { position: absolute; left: 0; top: -3px; width: 28px; height: 28px; }

.menu { display: flex; align-items: center; height: 27px; padding-left: 7px; font-family: "Noto Sans", "Noto Sans CJK SC", sans-serif; }
.menu > button { margin-right: 11px; flex: none; }
.menu .iconic { display: flex; align-items: center; gap: 3px; flex: none; }
.menu > .iconic { margin-right: 4px; }
.menu > .caret { margin-right: 4px; }
.tip { flex: none; width: 188px; height: 26px; padding: 5px 0 0 28px; margin-left: 4px; background: #f8f8f8; color: #7a3b08; text-decoration: none; }
.account { flex: 1; display: flex; align-items: center; height: 26px; padding-left: 6px; background: #f7f7f7; white-space: nowrap; }
.account > .caret { margin: 0 4px 0 6px; }
.account .beans { margin-right: 8px; }

:deep(.caret) { width: 12px; height: 20px; flex: none; display: grid; place-items: center; }
:deep(.caret)::before { content: ""; border: 3px solid transparent; border-top-color: #111; border-bottom: 0; }
:deep(.caret.tight) { margin-left: -4px; }
:deep(.caret.off)::before { border-top-color: #888; }
:deep(.more) { margin-left: auto; align-self: flex-start; width: 12px; flex: none; overflow: hidden; }

.topbars { display: flex; align-items: center; gap: 3px; height: 33px; }
:deep(.bar) { display: flex; align-items: center; height: 26px; flex: none; background: linear-gradient(#fdfdfd, #f3f3f3); border-radius: 3px; }
.topbars :deep(.bar) { height: 28px; padding-left: 1px; }
.topbars :deep(.first) { width: 149px; }
.topbars :deep(.second .more) { margin-left: 34px; }
.topbars :deep(.wide) { flex: 1; padding-right: 2px; }
:deep(.tool) { display: flex; align-items: center; gap: 3px; height: 24px; flex: none; }
.app :deep(.tool) { padding: 0 4px; }
.app :deep(.tool.off) { color: #8c8c8c; }
.app :deep(.tool.on) { background: #dcebf8; box-shadow: inset 0 0 0 1px #0a78d7; }
:deep(.sep) { width: 6px; height: 16px; flex: none; background: linear-gradient(#b8b8b8, #b8b8b8) 3px 0 / 1px 100% no-repeat; }
:deep(.grip) { width: 4px; height: 16px; margin-right: 1px; flex: none; background: repeating-linear-gradient(#b4b4b4 0 2px, transparent 2px 4px) 0 0 / 2px 100% no-repeat; }
:deep(.pick) { position: relative; width: 70px; height: 22px; margin: 0 1px; flex: none; background: #fff; display: flex; align-items: center; }
:deep(.pick)::after { content: ""; position: absolute; right: 4px; top: 10px; border: 3px solid transparent; border-top-color: #111; border-bottom: 0; }
:deep(.pick.short) { width: 58px; }
:deep(.pick.slim) { width: 56px; }
:deep(.pick.view) { width: 62px; margin: 0; padding-left: 2px; }
:deep(.pick select) { appearance: none; width: 100%; height: 22px; outline: 0; }
.app :deep(.pick select) { padding-left: 2px; }

.body { flex: 1; display: flex; min-height: 0; }
.side { width: 201px; flex: none; display: flex; flex-direction: column; padding-bottom: 2px; }
.side-head { display: flex; align-items: center; height: 17px; background: #0055e5; color: #fff; margin-right: 1px; }
.side-head span { flex: 1; }
.side-head button { width: 18px; }
.side-head .icon { width: 12px; height: 12px; margin-left: 3px; }
.app .tab { height: 22px; flex: none; margin-right: 1px; border: 1px solid #a0a0a0; border-top-color: #fff; background: #f0f0f0; }
.folds { display: flex; gap: 7px; height: 27px; padding: 7px; margin-right: 1px; border-right: 1px solid #a0a0a0; }
.treebox { flex: 1 1 0; min-height: 0; display: flex; margin: 0 2px 1px 1px; border: 1px solid #828790; background: #fff; overflow: hidden; }
.tree, .tree ul { list-style: none; margin: 0; padding: 0; }
.tree { flex: 1; padding-top: 1px; height: 484px; overflow: hidden; }
.group { display: flex; align-items: center; height: 16px; padding-left: 6px; }
.group .arrow { width: 12px; height: 12px; margin-right: 6px; }
.group span { margin-left: 4px; }
.tree ul { margin-left: 13px; border-left: 1px dotted #888; }
.leaf { height: 16px; margin-left: 18px; position: relative; border-left: 1px dotted #888; display: flex; }
.leaf:last-child { border-left-color: transparent; }
.leaf:last-child::after { content: ""; position: absolute; left: -1px; top: 0; height: 8px; border-left: 1px dotted #888; }
.leaf::before { content: ""; width: 9px; height: 8px; border-bottom: 1px dotted #888; }
.node { display: flex; align-items: center; gap: 4px; height: 16px; padding: 0 4px 0 1px; }
.picked { background: #d9d9d9; }
.node kbd, .status { font: 10px/16px "Liberation Mono", monospace; }
.scroll { width: 17px; display: flex; flex-direction: column; align-items: center; background: #f0f0f0; }
.scroll .icon { width: 12px; height: 17px; }
.thumb { align-self: stretch; flex: 1; margin-bottom: 29px; background: #cdcdcd; }

.work { flex: 1; min-width: 0; margin-left: 4px; display: flex; flex-direction: column; }
.row { display: flex; height: 28px; flex: none; align-items: flex-start; }
.row :deep(.bar) { padding-left: 3px; padding-right: 2px; }
.row :deep(.apart) { margin-left: 71px; }
.row :deep(.full) { flex: 1; margin-right: 4px; }
.row :deep(.stub) { width: 32px; }
.canvas { display: block; width: 100%; flex: 1; min-height: 0; isolation: isolate; }
.mark text { font: 700 14px "Liberation Sans", sans-serif; text-anchor: middle; fill: #fff; opacity: .75; mix-blend-mode: difference; }
.level text { font: 44px Lato, sans-serif; fill: #fff; opacity: .9; mix-blend-mode: difference; }

.row.snaps { align-items: center; padding-left: 227px; }
.row.modes { align-items: center; height: 32px; padding-bottom: 5px; justify-content: flex-start; }
.offset { margin-left: 268px; color: #777; }
.offset .pick, .check span { color: #000; }
.num { display: flex; align-items: center; gap: 2px; margin-right: 3px; }
.spin { position: relative; display: block; width: 58px; height: 23px; border: 1px solid #777; background: #f3f3f3; }
.spin.long { width: 68px; }
.app .spin input { width: 100%; height: 20px; padding-right: 18px; text-align: right; outline: 0; }
.spin i::before, .spin i::after { content: ""; position: absolute; right: 4px; border: 3px solid transparent; }
.spin i::before { top: 3px; border-top: 0; border-bottom-color: #555; }
.spin i::after { bottom: 3px; border-bottom: 0; border-top-color: #555; }
.check { display: flex; align-items: center; gap: 8px; margin-right: 4px; }
.app .check input { appearance: none; width: 12px; height: 12px; border: 1px solid #999; margin: 0; }

.status { display: flex; gap: 2px; height: 20px; }
.status > span { height: 20px; padding: 1px 0 0 1px; border: 1px solid #d5d5d5; border-width: 1px 1px 1px 0; background: #f8f8f8; white-space: nowrap; overflow: hidden; }
.status b, .status > span::before { font: 12px/16px "Noto Sans CJK SC", sans-serif; }
.status > span::before { content: "\200b"; }
.c1 { width: 148px; }
.c2 { width: 78px; }
.c3 { width: 98px; }
.c4 { width: 48px; }
.c5 { flex: 1; }
.c6 { width: 70px; }

.taskbar { --orbit: #fff; display: flex; align-items: center; height: 40px; background: #020a0e; color: #fff; }
.start { width: 48px; height: 40px; flex: none; display: grid; place-items: center; background: #000; }
.search { width: 344px; height: 40px; flex: none; display: flex; align-items: center; padding: 0 13px 0 9px; background: #333; color: #999; }
.search .ring { width: 20px; height: 20px; flex: none; border: 3px solid #fff; border-radius: 50%; margin-right: 7px; }
.app .search input { flex: 1; min-width: 0; font-size: 14px; outline: 0; }
.search input::placeholder { color: #999; }
.task { width: 50px; height: 40px; display: grid; place-items: center; flex: none; }
.task .icon { width: 22px; height: 22px; }
.task.view .icon { width: 20px; height: 16px; }
.task.open { width: 47px; }
.task.open .icon { width: 24px; height: 24px; }
.task.blue { color: #39a5e8; --orbit: #f5c72e; }
.app .task.run { background: linear-gradient(#76b9ed, #76b9ed) center bottom / 38px 2px no-repeat; }
.app .task.now { background: linear-gradient(#76b9ed, #76b9ed) center bottom / 100% 2px no-repeat #333d42; }
.cpu { width: 84px; flex: none; text-align: center; line-height: 17px; }
.tray { display: flex; margin-left: auto; }
.tray button { width: 25px; display: grid; place-items: center; }
.tray .keys { width: 29px; }
.tray .keys .icon { width: 22px; height: 20px; }
.clock { width: 78px; flex: none; text-align: center; line-height: 18px; }
.notice { position: relative; width: 46px; height: 40px; flex: none; }
.app .notice { padding-left: 9px; border-right: 1px solid #444; margin-right: 4px; }
.notice span { position: absolute; left: 14px; top: 18px; width: 22px; height: 16px; border-radius: 8px; background: #444; border: 1px solid #888; font-weight: 700; line-height: 14px; }
.ellipse { position: absolute; right: 44px; top: 123px; width: 162px; height: 62px; pointer-events: none; }
</style>

<style>
body { margin: 0; }
</style>
